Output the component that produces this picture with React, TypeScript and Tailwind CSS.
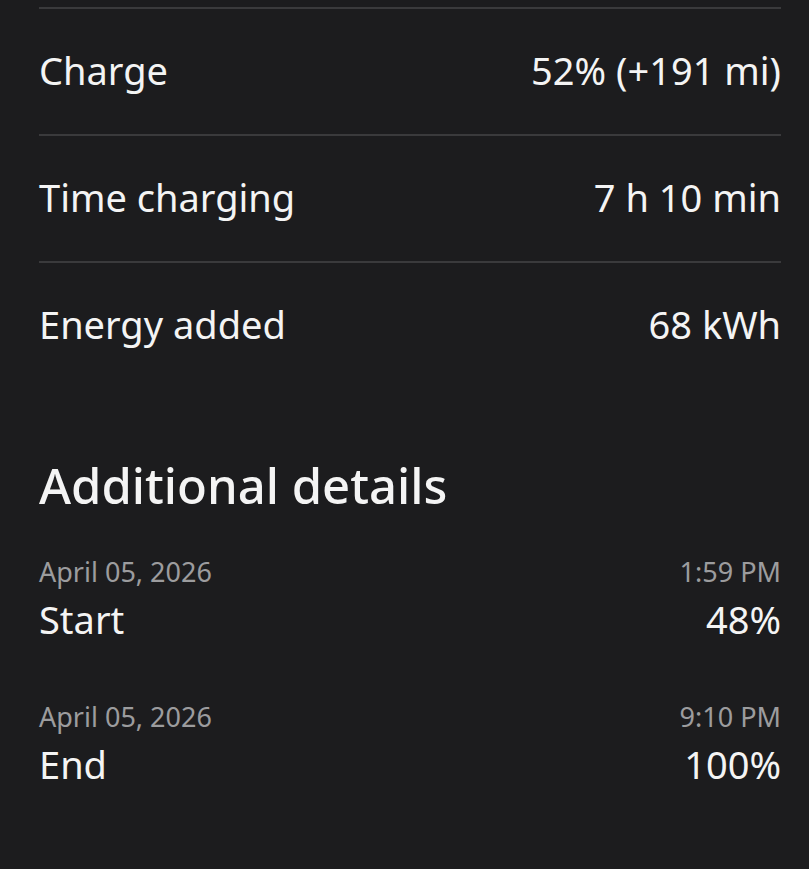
const summary = [
  { label: "Charge", value: "52% (+191 mi)" },
  { label: "Time charging", value: "7 h 10 min" },
  { label: "Energy added", value: "68 kWh" },
];

const details = [
  { date: "April 05, 2026", time: "1:59 PM", label: "Start", value: "48%" },
  { date: "April 05, 2026", time: "9:10 PM", label: "End", value: "100%" },
];

export default function App() {
  return (
    <div
      className="min-h-[869px] bg-[#1c1c1e] pl-[39px] pr-[28px] pt-[7px] text-[#f4f4f4]"
      style={{ fontFamily: '"Noto Sans", "Open Sans", sans-serif' }}
    >
      <div className="flex flex-col">
        {summary.map((row) => (
          <div
            key={row.label}
            className="flex h-[127px] items-center justify-between border-t-2 border-[#3a3a3c] pb-[4px] text-[38px] leading-[46px]"
          >
            <span>{row.label}</span>
            <span>{row.value}</span>
          </div>
        ))}
      </div>

      <h2 className="mt-[67px] text-[49px] font-medium leading-[60px]">Additional details</h2>

      <div className="mt-[41px] flex flex-col gap-[59px]">
        {details.map((d) => (
          <div key={d.label} className="flex flex-col">
            <div className="flex justify-between text-[27px] leading-[32px] text-[#9c9c9e]">
              <span>{d.date}</span>
              <span>{d.time}</span>
            </div>
            <div className="mt-[8px] flex justify-between text-[38px] leading-[46px]">
              <span>{d.label}</span>
              <span>{d.value}</span>
            </div>
          </div>
        ))}
      </div>
    </div>
  );
}
